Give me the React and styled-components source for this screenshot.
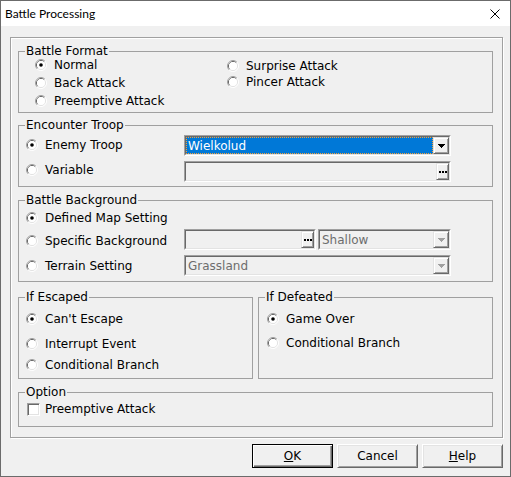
import React from 'react'
import styled, { createGlobalStyle } from 'styled-components'

const ui = `"DejaVu Sans", "Liberation Sans", sans-serif`

const GlobalStyle = createGlobalStyle`
  * { box-sizing: border-box; }
  body { margin: 0; background: #fff; }
`

const Window = styled.div`
  width: 511px;
  height: 477px;
  border: 1px solid #6b6b6b;
  background: #f0f0f0;
  display: flex;
  flex-direction: column;
  font: 12px ${ui};
  color: #000;
`

const TitleBar = styled.div`
  height: 25px;
  flex-shrink: 0;
  background: #fff;
  display: flex;
  align-items: center;
  justify-content: space-between;
  padding: 0 10px 0 4px;
  font: 12px Lato, "Noto Sans", sans-serif;
`

const Body = styled.div`
  flex: 1;
  display: flex;
  flex-direction: column;
  padding: 11px 7px 0 9px;
`

const Panel = styled.div`
  border: 1px solid #a0a0a0;
  box-shadow: inset 1px 1px 0 #fff, 1px 1px 0 #fff;
  padding: 7px 9px 10px 7px;
`

const Group = styled.fieldset`
  margin: ${p => p.$gap || 0}px 0 0;
  padding: 0;
  border: 1px solid #a0a0a0;
  min-width: 0;
  flex: 1;
`

const Caption = styled.legend`
  margin-left: 6px;
  padding: 0 1px;
  font: 12px/13px ${ui};
`

const Content = styled.div`
  padding: ${p => p.$pad};
`

const Columns = styled.div`
  display: grid;
  grid-template-columns: 192px 1fr;
  margin-top: -2px;
`

const Stack = styled.div`
  display: flex;
  flex-direction: column;
  padding-top: ${p => p.$top || 0}px;
`

const Choice = styled.label`
  display: flex;
  align-items: center;
  gap: ${p => p.$gap || 7}px;
  height: ${p => p.$h || 18}px;
  margin-top: ${p => p.$mt || 0}px;
  padding-top: ${p => p.$sink || 0}px;
  padding-bottom: ${p => p.$lift || 0}px;
  white-space: nowrap;
`

const FieldRow = styled.div`
  display: grid;
  grid-template-columns: 158px 267px;
  align-items: center;
  height: ${p => p.$h || 21}px;
  margin-top: ${p => p.$mt || 0}px;
`

const FieldPair = styled.div`
  display: flex;
  gap: 2px;
`

const Sunken = styled.div`
  height: 21px;
  width: ${p => p.$w}px;
  border: 1px solid;
  border-color: #a0a0a0 #fff #fff #a0a0a0;
  display: flex;
`

const Well = styled.div`
  flex: 1;
  min-width: 0;
  display: flex;
  border: 1px solid;
  border-color: #696969 #e3e3e3 #e3e3e3 #696969;
  background: ${p => (p.$on ? '#fff' : '#f0f0f0')};
`

const Value = styled.div`
  flex: 1;
  min-width: 0;
  display: flex;
  align-items: center;
  padding-left: ${p => p.$indent || 2}px;
  color: ${p => (p.$dim ? '#6d6d6d' : '#000')};
  white-space: nowrap;
  overflow: hidden;
`

const Selected = styled(Value)`
  background: #0078d7;
  color: #fff;
  outline: 1px dotted #f5a038;
  outline-offset: -1px;
`

const Raised = styled.div`
  width: ${p => p.$w}px;
  flex-shrink: 0;
  display: flex;
  align-items: center;
  justify-content: center;
  background: #f0f0f0;
  border: 1px solid;
  border-color: #e3e3e3 #696969 #696969 #e3e3e3;
  box-shadow: inset 1px 1px 0 #fff, inset -1px -1px 0 #a0a0a0;
`

const Box = styled.span`
  width: 13px;
  height: 13px;
  flex-shrink: 0;
  border: 1px solid;
  border-color: #a0a0a0 #fff #fff #a0a0a0;
  box-shadow: inset 1px 1px 0 #696969, inset -1px -1px 0 #e3e3e3;
  background: #fff;
`

const Pair = styled.div`
  display: flex;
  gap: 5px;
  margin-top: 9px;
`

const Footer = styled.div`
  display: flex;
  justify-content: flex-end;
  gap: 4px;
  margin-top: 6px;
`

const DlgButton = styled.button`
  width: 81px;
  height: 24px;
  padding: 0;
  font: 12px ${ui};
  color: #000;
  background: #f0f0f0;
  border: 1px solid;
  border-color: ${p => (p.$default ? '#000' : '#fff #696969 #696969 #fff')};
  box-shadow: ${p =>
    p.$default
      ? 'inset 1px 1px 0 #fff, inset -1px -1px 0 #696969, inset -2px -2px 0 #a0a0a0'
      : 'inset 1px 1px 0 #e3e3e3, inset -1px -1px 0 #a0a0a0'};
`

function Radio({ on }) {
  return (
    <svg width="12" height="12" viewBox="0 0 12 12" style={{ flexShrink: 0 }}>
      <path d="M2.11 9.89A5.5 5.5 0 0 1 9.89 2.11" stroke="#a0a0a0" fill="none" />
      <path d="M9.89 2.11A5.5 5.5 0 0 1 2.11 9.89" stroke="#fff" fill="none" />
      <path d="M2.82 9.18A4.5 4.5 0 0 1 9.18 2.82" stroke="#696969" fill="none" />
      <path d="M9.18 2.82A4.5 4.5 0 0 1 2.82 9.18" stroke="#e3e3e3" fill="none" />
      <circle cx="6" cy="6" r="4" fill="#fff" />
      {on && <circle cx="6" cy="6" r="1.8" fill="#000" />}
    </svg>
  )
}

function Arrow({ dim }) {
  const c = dim ? '#a0a0a0' : '#000'
  return (
    <svg width="7" height="4" viewBox="0 0 7 4">
      <rect x="0" y="0" width="7" height="1" fill={c} />
      <rect x="1" y="1" width="5" height="1" fill={c} />
      <rect x="2" y="2" width="3" height="1" fill={c} />
      <rect x="3" y="3" width="1" height="1" fill={c} />
    </svg>
  )
}

function Dots() {
  return (
    <svg width="8" height="2" viewBox="0 0 8 2">
      <rect x="0" y="0" width="2" height="2" fill="#000" />
      <rect x="3" y="0" width="2" height="2" fill="#000" />
      <rect x="6" y="0" width="2" height="2" fill="#000" />
    </svg>
  )
}

function Option({ on, children, ...rest }) {
  return (
    <Choice {...rest}>
      <Radio on={on} />
      <span>{children}</span>
    </Choice>
  )
}

export default function App() {
  return (
    <>
      <GlobalStyle />
      <Window>
        <TitleBar>
          <span>Battle Processing</span>
          <svg width="10" height="10" viewBox="0 0 10 10">
            <path d="M0.5 0.5L9.5 9.5M9.5 0.5L0.5 9.5" stroke="#000" strokeWidth="1" />
          </svg>
        </TitleBar>
        <Body>
          <Panel>
            <Group>
              <Caption>Battle Format</Caption>
              <Content $pad="0 0 2px 16px">
                <Columns>
                  <Stack>
                    <Option on>Normal</Option>
                    <Option>Back Attack</Option>
                    <Option>Preemptive Attack</Option>
                  </Stack>
                  <Stack $top={2}>
                    <Option $h={16}>Surprise Attack</Option>
                    <Option $h={16}>Pincer Attack</Option>
                  </Stack>
                </Columns>
              </Content>
            </Group>

            <Group $gap={6}>
              <Caption>Encounter Troop</Caption>
              <Content $pad="3px 0 4px 7px">
                <FieldRow>
                  <Option on $h={21} $lift={2}>Enemy Troop</Option>
                  <Sunken $w={267}>
                    <Well $on>
                      <Selected>Wielkolud</Selected>
                      <Raised $w={16}><Arrow /></Raised>
                    </Well>
                  </Sunken>
                </FieldRow>
                <FieldRow $mt={5}>
                  <Option $h={21} $lift={3}>Variable</Option>
                  <Sunken $w={267}>
                    <Well>
                      <Value />
                      <Raised $w={13}><Dots /></Raised>
                    </Well>
                  </Sunken>
                </FieldRow>
              </Content>
            </Group>

            <Group $gap={7}>
              <Caption>Battle Background</Caption>
              <Content $pad="0 0 5px 7px">
                <FieldRow $h={22}>
                  <Option on $h={22}>Defined Map Setting</Option>
                </FieldRow>
                <FieldRow>
                  <Option $h={21} $sink={2}>Specific Background</Option>
                  <FieldPair>
                    <Sunken $w={132}>
                      <Well>
                        <Value />
                        <Raised $w={13}><Dots /></Raised>
                      </Well>
                    </Sunken>
                    <Sunken $w={133}>
                      <Well>
                        <Value $dim>Shallow</Value>
                        <Raised $w={16}><Arrow dim /></Raised>
                      </Well>
                    </Sunken>
                  </FieldPair>
                </FieldRow>
                <FieldRow $mt={5}>
                  <Option $h={21} $sink={1}>Terrain Setting</Option>
                  <Sunken $w={267}>
                    <Well>
                      <Value $dim>Grassland</Value>
                      <Raised $w={16}><Arrow dim /></Raised>
                    </Well>
                  </Sunken>
                </FieldRow>
              </Content>
            </Group>

            <Pair>
              <Group>
                <Caption>If Escaped</Caption>
                <Content $pad="6px 0 4px 7px">
                  <Option on>Can't Escape</Option>
                  <Option $mt={7}>Interrupt Event</Option>
                  <Option $mt={3}>Conditional Branch</Option>
                </Content>
              </Group>
              <Group>
                <Caption>If Defeated</Caption>
                <Content $pad="6px 0 4px 8px">
                  <Option on>Game Over</Option>
                  <Option $mt={6}>Conditional Branch</Option>
                </Content>
              </Group>
            </Pair>

            <Group $gap={7}>
              <Caption>Option</Caption>
              <Content $pad="3px 0 10px 8px">
                <Choice $h={14} $gap={5}>
                  <Box />
                  <span>Preemptive Attack</span>
                </Choice>
              </Content>
            </Group>
          </Panel>

          <Footer>
            <DlgButton $default><u>O</u>K</DlgButton>
            <DlgButton>Cancel</DlgButton>
            <DlgButton><u>H</u>elp</DlgButton>
          </Footer>
        </Body>
      </Window>
    </>
  )
}
